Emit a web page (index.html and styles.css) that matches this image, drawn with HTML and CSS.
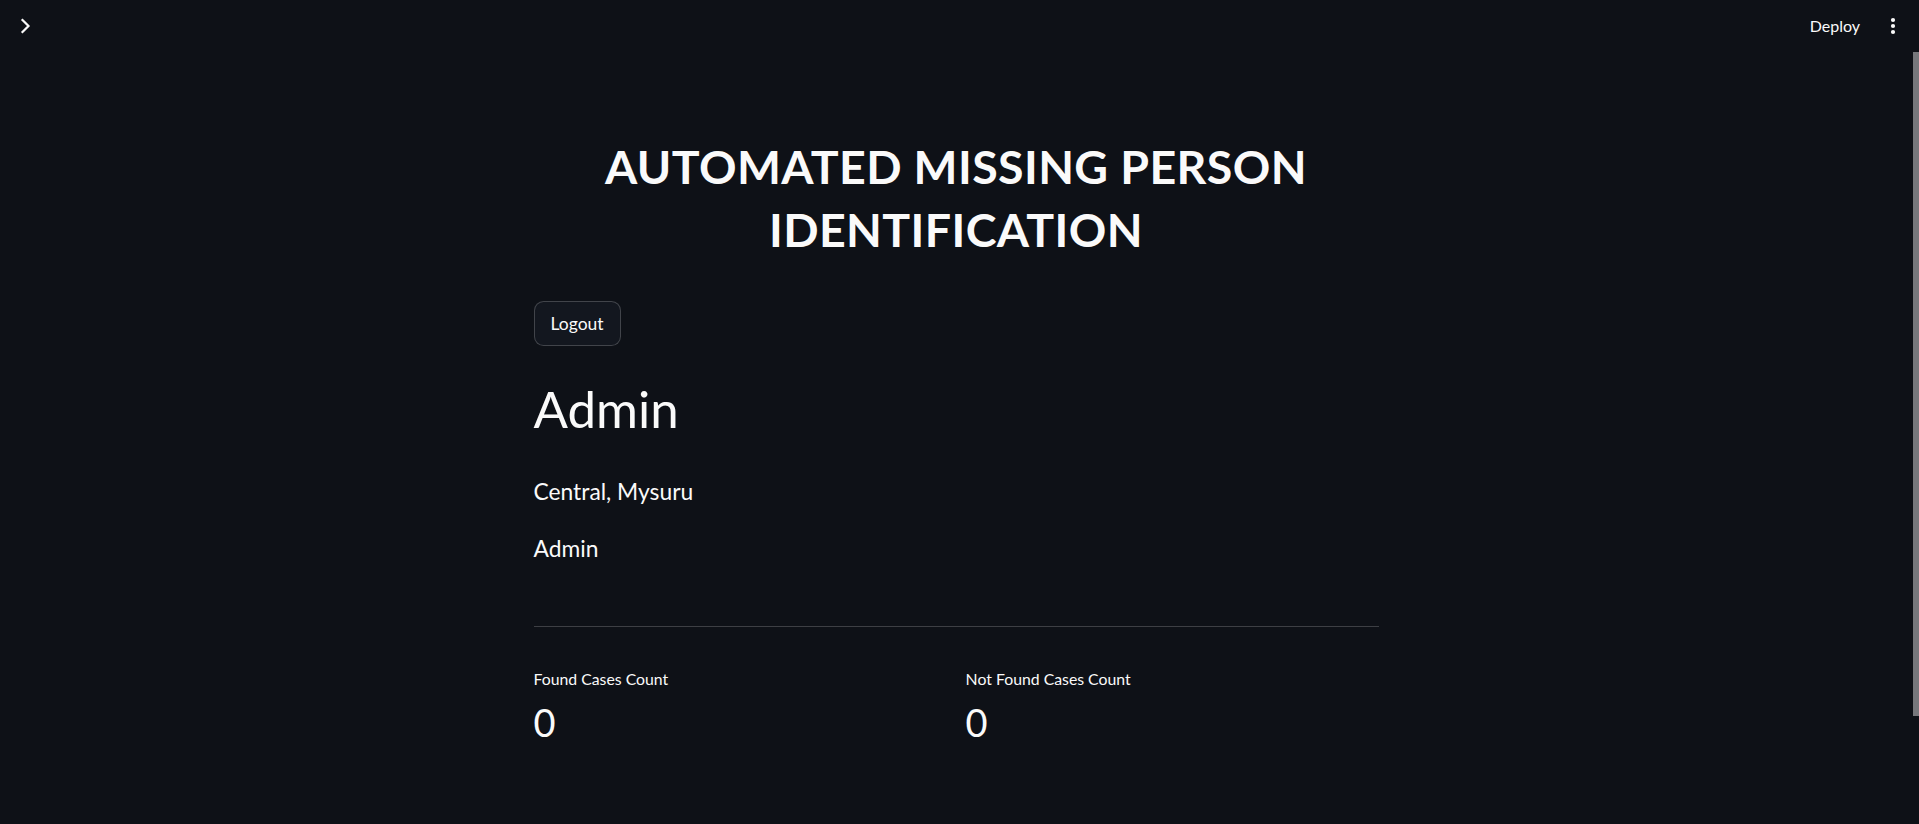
FILE: index.html
```html
<!DOCTYPE html>
<html lang="en">
<head>
<meta charset="utf-8">
<title>Automated Missing Person Identification</title>
<link rel="stylesheet" href="styles.css">
</head>
<body>
<div class="app">
  <div class="main">
    <header class="topbar">
      <button class="sidebar-toggle" aria-label="Open sidebar">
        <svg width="12" height="16" viewBox="0 0 12 16"><polyline points="2.5,2 8.5,8 2.5,14" fill="none" stroke="#fafafa" stroke-width="2.2" stroke-linecap="square" stroke-linejoin="miter"/></svg>
      </button>
      <div class="spacer"></div>
      <button class="deploy">Deploy</button>
      <button class="menu" aria-label="Main menu">
        <svg width="6" height="18" viewBox="0 0 6 18"><circle cx="3" cy="3" r="2.1" fill="#fafafa"/><circle cx="3" cy="9" r="2.1" fill="#fafafa"/><circle cx="3" cy="15" r="2.1" fill="#fafafa"/></svg>
      </button>
    </header>
    <section class="block">
      <h1 class="title">AUTOMATED MISSING PERSON<br>IDENTIFICATION</h1>
      <div class="btn-row"><button class="btn">Logout</button></div>
      <h1 class="name">Admin</h1>
      <h4 class="info">Central, Mysuru</h4>
      <h4 class="info info-second">Admin</h4>
      <hr class="divider">
      <div class="metrics">
        <div class="metric">
          <div class="metric-label">Found Cases Count</div>
          <div class="metric-value">0</div>
        </div>
        <div class="metric">
          <div class="metric-label">Not Found Cases Count</div>
          <div class="metric-value">0</div>
        </div>
      </div>
    </section>
  </div>
  <div class="gutter"><div class="thumb"></div></div>
</div>
</body>
</html>
```

FILE: styles.css
```css
* { box-sizing: border-box; }
html, body {
  margin: 0;
  padding: 0;
  background: #0e1117;
  color: #fafafa;
  font-family: Lato, "Noto Sans", sans-serif;
  height: 100%;
  overflow: hidden;
}
.app {
  display: flex;
  height: 824px;
}
.main {
  flex: 1;
  display: flex;
  flex-direction: column;
}
.gutter {
  width: 7px;
  padding-top: 52px;
}
.thumb {
  width: 6px;
  margin-left: 1px;
  height: 664px;
  background: #77787c;
}
.topbar {
  height: 51px;
  display: flex;
  align-items: center;
  padding: 0 16px 0 19px;
}
.topbar button {
  background: none;
  border: none;
  color: #fafafa;
  font-family: inherit;
  padding: 0;
  cursor: pointer;
}
.sidebar-toggle {
  width: 14px;
  height: 16px;
  display: flex;
  align-items: center;
  justify-content: center;
}
.spacer { flex: 1; }
.deploy {
  font-size: 16px;
  margin-right: 30px;
}
.menu {
  display: flex;
  align-items: center;
}
.block {
  width: 845px;
  margin: 84px auto 0;
}
.title {
  margin: 0;
  text-align: center;
  font-size: 46.5px;
  line-height: 63.4px;
  font-weight: 700;
  letter-spacing: 0.4px;
}
.btn-row {
  margin-top: 39.5px;
}
.btn {
  height: 45px;
  padding: 0 16px;
  border: 1px solid rgba(250, 250, 250, 0.2);
  border-radius: 9.6px;
  background: #13171f;
  color: #fafafa;
  font-family: inherit;
  font-size: 17.5px;
}
.name {
  margin: 33.2px 0 0;
  font-size: 51px;
  line-height: 58px;
  font-weight: 400;
}
.info {
  margin: 37px 0 0;
  font-size: 22.8px;
  line-height: 33.6px;
  font-weight: 400;
}
.info-second {
  margin-top: 24.1px;
}
.divider {
  margin: 60.6px 0 0;
  border: none;
  height: 1px;
  background: rgba(250, 250, 250, 0.2);
}
.metrics {
  display: grid;
  grid-template-columns: 1fr 1fr;
  column-gap: 19.2px;
  margin-top: 42px;
}
.metric-label {
  font-size: 15.8px;
  line-height: 20px;
}
.metric-value {
  margin-top: 9.6px;
  font-size: 38px;
  line-height: 46px;
}
```
